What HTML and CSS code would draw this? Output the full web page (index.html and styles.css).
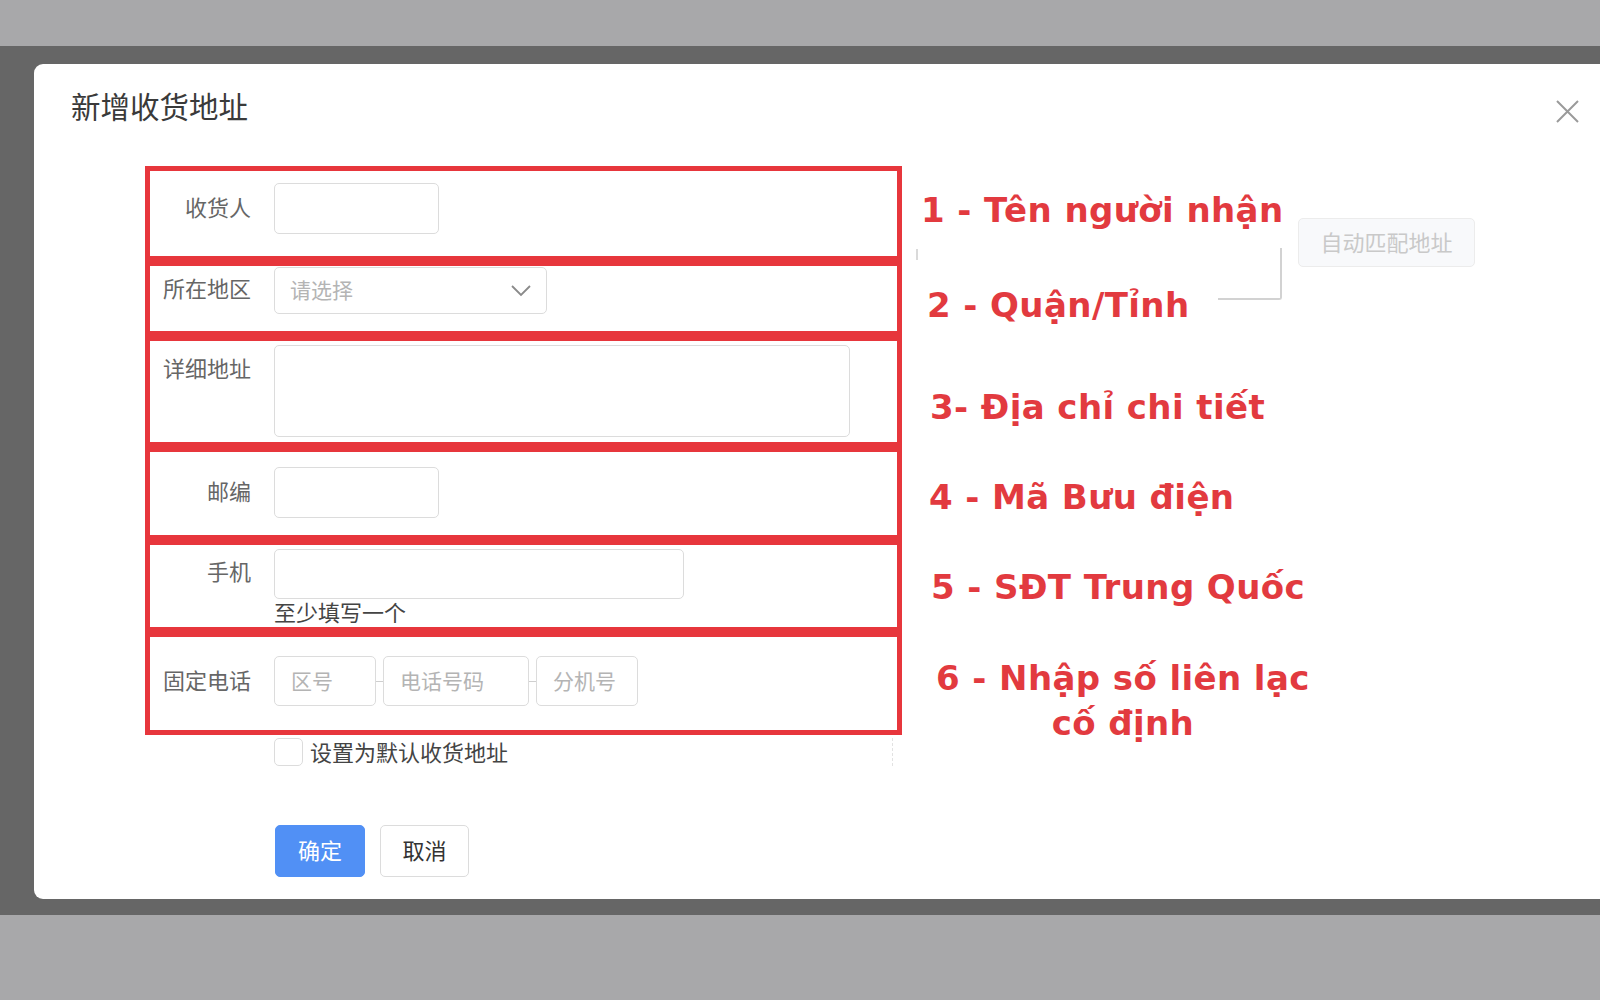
FILE: index.html
```html
<!DOCTYPE html>
<html lang="zh-CN">
<head>
<meta charset="utf-8">
<title>新增收货地址</title>
<link rel="stylesheet" href="styles.css">
</head>
<body>
<div class="photo">
  <div class="screen">
    <div class="modal">
      <h2 class="title">新增收货地址</h2>
      <span class="close" aria-label="关闭">
        <svg width="23" height="23" viewBox="0 0 23 23"><path d="M1 1 L22 22 M22 1 L1 22" stroke="#9a9a9a" stroke-width="2" fill="none"/></svg>
      </span>

      <div class="rows">
        <div class="row">
          <div class="box b1">
            <span class="lbl">收货人</span>
            <div class="field short"></div>
          </div>
          <div class="note n1">1 - Tên người nhận</div>
        </div>
        <div class="row">
          <div class="box b2">
            <span class="lbl">所在地区</span>
            <div class="field select"><span class="ph">请选择</span>
              <svg class="chev" width="20" height="12" viewBox="0 0 20 12"><path d="M1 1 L10 10 L19 1" stroke="#8a8a8a" stroke-width="1.8" fill="none"/></svg>
            </div>
          </div>
          <div class="note n2">2 - Quận/Tỉnh</div>
        </div>
        <div class="row">
          <div class="box b3">
            <span class="lbl top">详细地址</span>
            <div class="field area"></div>
          </div>
          <div class="note n3">3- Địa chỉ chi tiết</div>
        </div>
        <div class="row">
          <div class="box b4">
            <span class="lbl">邮编</span>
            <div class="field short"></div>
          </div>
          <div class="note n4">4 - Mã Bưu điện</div>
        </div>
        <div class="row">
          <div class="box b5">
            <span class="lbl">手机</span>
            <div class="stack">
              <div class="field long"></div>
              <span class="hint">至少填写一个</span>
            </div>
          </div>
          <div class="note n5">5 - SĐT Trung Quốc</div>
        </div>
        <div class="row">
          <div class="box b6">
            <span class="lbl">固定电话</span>
            <div class="phones">
              <div class="field tel-s"><span class="ph">区号</span></div>
              <span class="dash"></span>
              <div class="field tel-m"><span class="ph">电话号码</span></div>
              <span class="dash"></span>
              <div class="field tel-s"><span class="ph">分机号</span></div>
            </div>
          </div>
          <div class="note n6">6 - Nhập số liên lạc<br>cố định</div>
        </div>
      </div>

      <div class="check-row">
        <span class="checkbox"></span>
        <span class="check-label">设置为默认收货地址</span>
      </div>

      <div class="actions">
        <button class="btn primary">确定</button>
        <button class="btn">取消</button>
      </div>

      <button class="auto-btn">自动匹配地址</button>
      <span class="bracket"></span>
      <span class="tick"></span>
    </div>
  </div>
</div>
</body>
</html>
```

FILE: styles.css
```css
* { box-sizing: border-box; }

html, body {
  margin: 0;
  padding: 0;
}

body {
  width: 1600px;
  height: 1000px;
  overflow: hidden;
  background: #a8a8aa;
  font-family: "Noto Sans CJK SC", "Noto Sans", sans-serif;
}

.photo {
  width: 1600px;
  height: 1000px;
  padding-top: 46px;
  background: #a8a8aa;
}

.screen {
  height: 869px;
  background: #666666;
  padding: 18px 0 0 34px;
}

.modal {
  position: relative;
  height: 835px;
  background: #ffffff;
  border-radius: 9px 0 0 9px;
  padding-top: 26px;
}

.title {
  margin: 0 0 0 37px;
  font-size: 29.5px;
  line-height: 30px;
  font-weight: 400;
  color: #3a3a3a;
}

.close {
  position: absolute;
  top: 36px;
  right: 21px;
  width: 23px;
  height: 23px;
}
.close svg { display: block; }

.rows {
  margin: 46px 0 0 111px;
  display: flex;
  flex-direction: column;
}

.row {
  display: flex;
  align-items: flex-start;
}

.box {
  width: 757px;
  border: 5px solid #e7363c;
  display: flex;
  align-items: flex-start;
  flex-shrink: 0;
}

.b1 { height: 95px; padding-top: 12px; }
.b2 { height: 75px; padding-top: 1px; }
.b3 { height: 111px; padding-top: 4px; }
.b4 { height: 93px; padding-top: 15px; }
.b5 { height: 92px; padding-top: 4px; }
.b6 { height: 103px; padding-top: 19px; }

.lbl {
  width: 101px;
  margin-right: 23px;
  text-align: right;
  font-size: 22px;
  color: #666;
  line-height: 24px;
  flex-shrink: 0;
  align-self: flex-start;
}

.b1 .lbl { margin-top: 11px; }
.b2 .lbl { margin-top: 8px; }
.b3 .lbl { margin-top: 10px; }
.b4 .lbl { margin-top: 11px; }
.b5 .lbl { margin-top: 9px; }
.b6 .lbl { margin-top: 11px; }

.field {
  border: 1.5px solid #dcdcdc;
  border-radius: 5px;
  background: #fff;
  display: flex;
  align-items: center;
  flex-shrink: 0;
}

.short { width: 165px; height: 51px; }
.select {
  width: 273px;
  height: 47px;
  padding: 0 15px 0 15px;
  justify-content: space-between;
}
.area { width: 576px; height: 92px; }
.long { width: 410px; height: 50px; }
.tel-s { width: 102px; height: 50px; padding-left: 16px; }
.tel-m { width: 146px; height: 50px; padding-left: 16px; }

.ph {
  font-size: 21px;
  color: #b4b4b4;
  line-height: 24px;
  margin-top: -3px;
}

.chev { display: block; }

.stack {
  display: flex;
  flex-direction: column;
}

.hint {
  font-size: 22px;
  line-height: 24px;
  color: #444;
  margin-top: 0;
}

.phones {
  display: flex;
  align-items: center;
}

.dash {
  width: 7px;
  height: 1px;
  background: #cfcfcf;
}

.note {
  font-family: "DejaVu Sans", "Open Sans", sans-serif;
  font-weight: 700;
  font-size: 34px;
  letter-spacing: 0.4px;
  line-height: 40px;
  color: #e23a3f;
  white-space: nowrap;
  height: 0;
  overflow: visible;
}

.n1 { margin: 24px 0 0 19px; }
.n2 { margin: 24px 0 0 25px; }
.n3 { margin: 51px 0 0 28px; }
.n4 { margin: 30px 0 0 27px; }
.n5 { margin: 27px 0 0 29px; }
.n6 { margin: 24px 0 0 34px; text-align: center; line-height: 45px; }

.check-row {
  margin: 3px 0 0 240px;
  display: flex;
  align-items: center;
  gap: 7px;
  width: 619px;
  border-right: 1px dashed #e2e2e2;
  height: 28px;
}

.checkbox {
  width: 29px;
  height: 28px;
  border: 1.5px solid #dcdcdc;
  border-radius: 5px;
}

.check-label {
  font-size: 22px;
  color: #444;
  line-height: 24px;
  margin-top: -2px;
}

.actions {
  margin: 59px 0 0 241px;
  display: flex;
  gap: 15px;
}

.btn {
  height: 52px;
  width: 89px;
  border: 1.5px solid #dcdcdc;
  border-radius: 5px;
  background: #fff;
  font-family: "Noto Sans CJK SC", sans-serif;
  font-size: 22px;
  line-height: 24px;
  color: #333;
  padding: 0 0 4px 0;
}

.btn.primary {
  width: 90px;
  background: #5190f5;
  border-color: #5190f5;
  color: #fff;
}

.auto-btn {
  position: absolute;
  left: 1264px;
  top: 154px;
  width: 177px;
  height: 49px;
  background: #f8f9fb;
  border: 1px solid #ececec;
  border-radius: 5px;
  font-family: "Noto Sans CJK SC", sans-serif;
  font-size: 22px;
  line-height: 24px;
  color: #c9c9c9;
  padding: 0 0 4px 0;
}

.bracket {
  position: absolute;
  left: 1184px;
  top: 184px;
  width: 64px;
  height: 52px;
  border-right: 2px solid #d2d2d2;
  border-bottom: 2px solid #d2d2d2;
  border-radius: 0 0 3px 0;
}

.tick {
  position: absolute;
  left: 882px;
  top: 185px;
  width: 2px;
  height: 11px;
  background: #dadada;
}
```
